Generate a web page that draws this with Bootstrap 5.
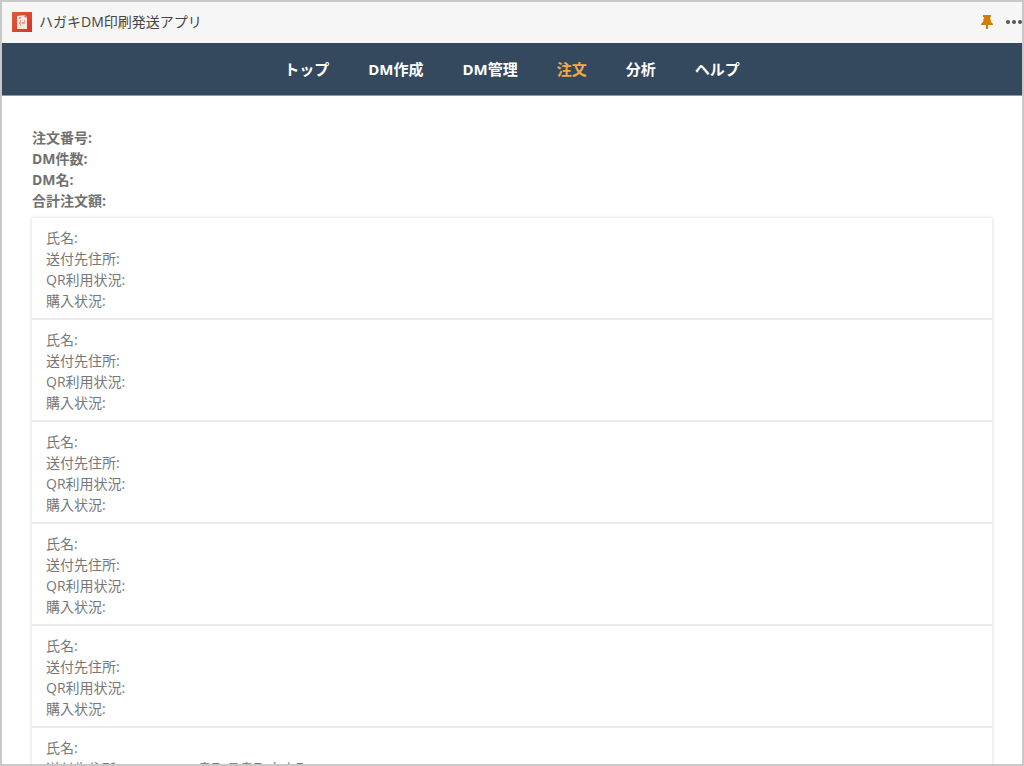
<!DOCTYPE html>
<html lang="ja">
<head>
<meta charset="utf-8">
<meta name="viewport" content="width=device-width, initial-scale=1">
<title>ハガキDM印刷発送アプリ</title>
<link href="https://cdn.jsdelivr.net/npm/bootstrap@5.3.0/dist/css/bootstrap.min.css" rel="stylesheet">
<style>
body{font-family:"Open Sans","Noto Sans CJK JP",sans-serif;font-size:14px;line-height:21px;color:#707070}
.app-frame{border:2px solid #c8c8c8}
.app-bar{background:#f6f6f6;color:#444;height:41px;padding:0 0 2px 10px}
.app-title{font-size:14px;line-height:21px;font-weight:400;margin-left:7px}
.app-actions{gap:13px}
.main-nav{background:#34495e;border-bottom:1px solid #8f9aa6;height:53px;gap:39px}
.main-nav .nav-link{color:#fff;font-size:15px;line-height:21px;font-weight:700}
.main-nav .nav-link.active{color:#f2ab45}
.page{padding:31px 30px}
.order-list{box-shadow:0 0 4px rgba(0,0,0,.16);margin-top:7px}
.order-list .list-group-item{color:#777;padding:9px 14px 7px;border:0;border-bottom:2px solid #ebebeb}
</style>
</head>
<body>
<div class="app-frame vh-100 overflow-hidden d-flex flex-column">
  <header class="app-bar d-flex align-items-center flex-shrink-0">
    <svg width="20" height="20" viewBox="0 0 20 20" aria-hidden="true">
      <defs><linearGradient id="logo" x1="0" y1="0" x2="1" y2="1"><stop offset="0" stop-color="#dc6038"/><stop offset="1" stop-color="#d9302c"/></linearGradient></defs>
      <rect width="20" height="20" fill="url(#logo)"/>
      <path d="M5 4l8-1 2 2v12H5z" fill="#fbe8e2"/>
      <path d="M13 3v2h2M7 6h2M8 9h1M12 9h1M7 11h2M10 11h3M8 13h1" fill="none" stroke="#df5540"/>
    </svg>
    <h1 class="app-title mb-0">ハガキDM印刷発送アプリ</h1>
    <div class="app-actions d-flex align-items-center ms-auto">
      <button class="btn p-0 border-0 d-flex" type="button" aria-label="ピン留め">
        <svg width="12" height="16" viewBox="0 0 12 16" fill="#d17f00"><path d="M2 1h8v2H9l1 5q2 1 2 3H7v4H5v-4H0q0-2 2-3l1-5H2z"/></svg>
      </button>
      <button class="btn p-0 border-0 d-flex" type="button" aria-label="メニュー">
        <svg width="16" height="16" viewBox="0 0 16 16" fill="#555"><circle cx="2" cy="8" r="2"/><circle cx="8" cy="8" r="2"/><circle cx="14" cy="8" r="2"/></svg>
      </button>
    </div>
  </header>
  <nav class="main-nav nav justify-content-center align-items-center flex-shrink-0 flex-nowrap">
    <a class="nav-link p-0" href="#">トップ</a>
    <a class="nav-link p-0" href="#">DM作成</a>
    <a class="nav-link p-0" href="#">DM管理</a>
    <a class="nav-link p-0 active" aria-current="page" href="#">注文</a>
    <a class="nav-link p-0" href="#">分析</a>
    <a class="nav-link p-0" href="#">ヘルプ</a>
  </nav>
  <main class="page">
    <div class="fw-bold">
      <div>注文番号:</div><div>DM件数:</div><div>DM名:</div><div>合計注文額:</div>
    </div>
    <ul class="order-list list-group rounded-0">
      <li class="list-group-item"><div>氏名:</div><div>送付先住所:</div><div>QR利用状況:</div><div>購入状況:</div></li>
      <li class="list-group-item"><div>氏名:</div><div>送付先住所:</div><div>QR利用状況:</div><div>購入状況:</div></li>
      <li class="list-group-item"><div>氏名:</div><div>送付先住所:</div><div>QR利用状況:</div><div>購入状況:</div></li>
      <li class="list-group-item"><div>氏名:</div><div>送付先住所:</div><div>QR利用状況:</div><div>購入状況:</div></li>
      <li class="list-group-item"><div>氏名:</div><div>送付先住所:</div><div>QR利用状況:</div><div>購入状況:</div></li>
      <li class="list-group-item"><div>氏名:</div><div>送付先住所: 680-8570　鳥取県鳥取市東町1-220</div></li>
    </ul>
  </main>
</div>
<script src="https://cdn.jsdelivr.net/npm/bootstrap@5.3.0/dist/js/bootstrap.bundle.min.js"></script>
</body>
</html>
